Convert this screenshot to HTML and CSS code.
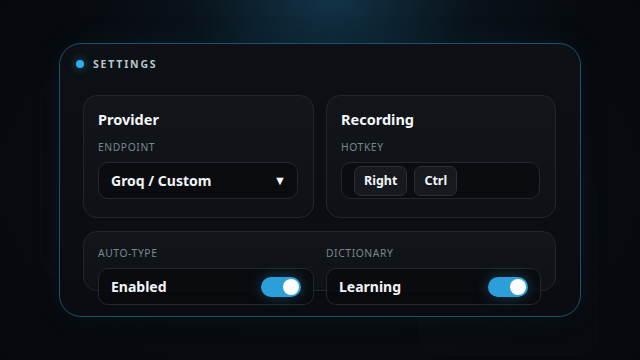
FILE: index.html
```html
<!DOCTYPE html>
<html lang="en">
  <head>
    <meta charset="UTF-8" />
    <meta name="viewport" content="width=device-width, initial-scale=1.0" />
    <title>Settings</title>
    <link rel="stylesheet" href="styles.css">
  </head>
  <body>
    <!-- faint cards sitting behind the panel -->
    <div class="ghost ghost-left"></div>
    <div class="ghost ghost-right"></div>

    <div class="panel">
      <div class="panel-header">
        <span class="dot"></span>
        <span class="panel-title">SETTINGS</span>
      </div>

      <div class="grid">
        <div class="card">
          <h2 class="card-title">Provider</h2>
          <div class="label">ENDPOINT</div>
          <div class="field select">
            <span>Groq / Custom</span>
            <span class="caret">▼</span>
          </div>
        </div>

        <div class="card">
          <h2 class="card-title">Recording</h2>
          <div class="label">HOTKEY</div>
          <div class="field keys">
            <span class="key">Right</span>
            <span class="key">Ctrl</span>
          </div>
        </div>
      </div>

      <div class="card card-wide">
        <div class="option">
          <div class="label">AUTO-TYPE</div>
          <div class="field row">
            <span>Enabled</span>
            <span class="toggle"><span class="knob"></span></span>
          </div>
        </div>
        <div class="option">
          <div class="label">DICTIONARY</div>
          <div class="field row">
            <span>Learning</span>
            <span class="toggle"><span class="knob"></span></span>
          </div>
        </div>
      </div>
    </div>
  </body>
</html>
```

FILE: styles.css
```css
* {
  margin: 0;
  padding: 0;
  box-sizing: border-box;
}

body {
  width: 640px;
  height: 360px;
  overflow: hidden;
  position: relative;
  font-family: "Noto Sans", "Open Sans", sans-serif;
  color: #f2f5f7;
  background:
    radial-gradient(ellipse 260px 170px at 330px 0px, rgba(20, 62, 86, 0.8) 0%, rgba(12, 32, 46, 0.35) 55%, rgba(6, 9, 13, 0) 100%),
    radial-gradient(ellipse 480px 300px at 320px 180px, #0a0e13 0%, #06080c 100%);
  padding: 43px 59px 0;
}

.ghost {
  position: absolute;
  border: 1px solid rgba(120, 150, 170, 0.035);
  background: rgba(255, 255, 255, 0.006);
  border-radius: 20px;
}

.ghost-left {
  left: 40px;
  top: 80px;
  width: 200px;
  height: 195px;
}

.ghost-right {
  left: 420px;
  top: 175px;
  width: 177px;
  height: 180px;
}

.panel {
  position: relative;
  width: 522px;
  height: 274px;
  border: 1px solid #1b5270;
  border-radius: 22px;
  background: linear-gradient(180deg, #0d1014 0%, #090c10 100%);
  padding: 13px 24px 0 23px;
  box-shadow: 0 0 30px rgba(20, 80, 110, 0.12);
}

.panel-header {
  display: flex;
  align-items: center;
  gap: 9px;
  height: 16px;
  margin-left: -7px;
  margin-top: -1px;
}

.dot {
  width: 8px;
  height: 8px;
  border-radius: 50%;
  background: #2eaef0;
  box-shadow: 0 0 10px rgba(46, 174, 240, 0.6);
}

.panel-title {
  font-size: 10.5px;
  font-weight: 700;
  letter-spacing: 1.8px;
  color: #b9c6cd;
}

.grid {
  display: grid;
  grid-template-columns: 231px 230px;
  gap: 12px;
  margin-top: 23px;
}

.card {
  height: 123px;
  border: 1px solid #22262b;
  border-radius: 14px;
  background: linear-gradient(180deg, #121519 0%, #0e1115 100%);
  padding: 13px 15px 0 14px;
}

.card-title {
  font-size: 14.5px;
  font-weight: 700;
  line-height: 20px;
  color: #f4f6f8;
}

.label {
  font-size: 10.3px;
  letter-spacing: 0.6px;
  color: #7b8891;
  line-height: 14px;
  margin-top: 11px;
}

.field {
  height: 37px;
  margin-top: 8px;
  border: 1px solid #24282d;
  border-radius: 10px;
  background: #0a0c0f;
  display: flex;
  align-items: center;
  font-size: 14px;
  font-weight: 700;
}

.select {
  justify-content: space-between;
  padding: 0 11px 0 12px;
}

.caret {
  font-size: 12.5px;
  color: #f4f6f8;
}

.keys {
  gap: 7px;
  padding: 0 12px;
}

.key {
  height: 30px;
  padding: 0 9px;
  border: 1px solid #2b3035;
  border-radius: 7px;
  background: #16191d;
  display: flex;
  align-items: center;
  font-size: 12.5px;
}

.card-wide {
  height: 60px;
  margin-top: 13px;
  width: 473px;
  display: grid;
  grid-template-columns: 216px 215px;
  gap: 12px;
  padding: 0 14px;
}

.option .label {
  margin-top: 14px;
}

.row {
  justify-content: space-between;
  padding: 0 12px;
  background: rgba(9, 11, 14, 0.85);
}

.toggle {
  position: relative;
  width: 40px;
  height: 20px;
  border-radius: 10px;
  background: #2d9fd8;
  box-shadow: 0 0 14px rgba(45, 159, 216, 0.35);
}

.knob {
  position: absolute;
  right: 2px;
  top: 2px;
  width: 16px;
  height: 16px;
  border-radius: 50%;
  background: #ffffff;
}
```
